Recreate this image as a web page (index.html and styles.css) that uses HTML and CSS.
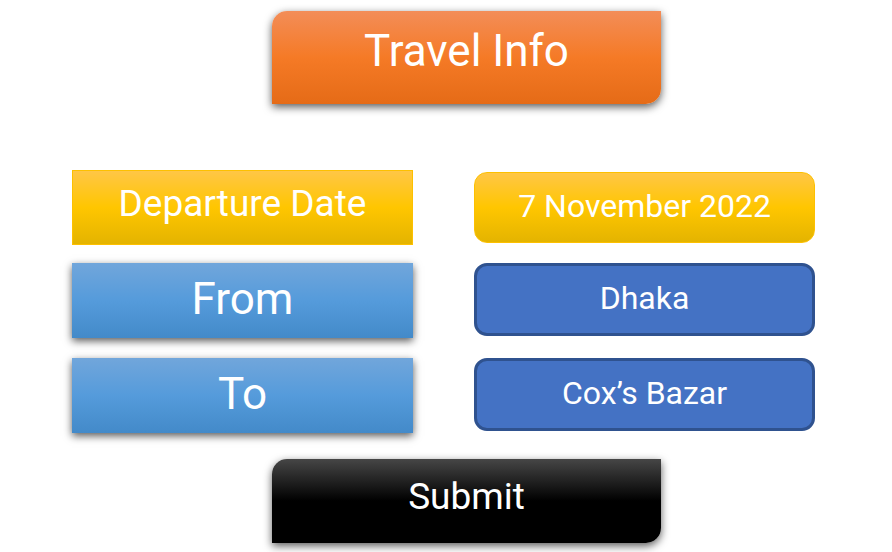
FILE: index.html
```html
<!DOCTYPE html>
<html lang="en">
<head>
  <meta charset="utf-8">
  <meta name="viewport" content="width=device-width, initial-scale=1">
  <title>Travel Info</title>
  <link rel="stylesheet" href="styles.css">
</head>
<body>
  <main class="page">
    <h1 class="title">Travel Info</h1>
    <form class="form">
      <div class="row">
        <label class="label label-date" for="date">Departure Date</label>
        <input class="value value-date" id="date" type="text" value="7 November 2022">
      </div>
      <div class="route">
        <div class="row">
          <label class="label label-place" for="from">From</label>
          <input class="value value-place" id="from" type="text" value="Dhaka">
        </div>
        <div class="row">
          <label class="label label-place" for="to">To</label>
          <input class="value value-place" id="to" type="text" value="Cox’s Bazar">
        </div>
      </div>
      <button class="submit" type="submit">Submit</button>
    </form>
  </main>
</body>
</html>
```

FILE: styles.css
```css
* {
  box-sizing: border-box;
}

body {
  margin: 0;
  background: #fff;
  color: #fff;
  font-family: Roboto, "Liberation Sans", sans-serif;
}

.page {
  padding: 11px 77px 9px 72px;
}

.title,
.submit {
  border-radius: 15px 0;
  box-shadow: 0 3px 8px rgba(0, 0, 0, 0.65);
  text-align: center;
}

.title {
  margin: 0 154px 66px 200px;
  padding: 14px 0 27px;
  background: linear-gradient(#f38d58, #f57a26 50%, #e56b17);
  font-size: 44px;
  font-weight: 400;
  line-height: 52px;
}

.form {
  display: flex;
  flex-direction: column;
}

.row {
  display: grid;
  grid-template-columns: 1fr 1fr;
  column-gap: 61px;
  align-items: center;
}

.route {
  display: grid;
  row-gap: 20px;
  margin: 18px 0 26px;
}

.label {
  display: block;
  height: 75px;
  text-align: center;
}

.label-date {
  padding-bottom: 8px;
  border: 1px solid #fdc000;
  background: linear-gradient(#ffc646, #ffc600 50%, #e4b400);
  font-size: 37px;
  line-height: 65px;
}

.label-place {
  background: linear-gradient(#71a6db, #559bdb 50%, #438ac9);
  box-shadow: 0 3px 8px rgba(0, 0, 0, 0.65);
  font-size: 44px;
  line-height: 72px;
}

.value {
  width: 100%;
  min-width: 0;
  margin: 0;
  border-radius: 13px;
  color: inherit;
  font-family: inherit;
  font-size: 32px;
  text-align: center;
}

.value-date {
  height: 71px;
  padding: 0 0 3px;
  border: 1px solid #fdc000;
  background: linear-gradient(#ffc646, #ffc600 50%, #e4b400);
}

.value-place {
  align-self: start;
  height: 73px;
  padding: 0 0 3px;
  border: 3px solid #2f528f;
  background: #4472c4;
}

.submit {
  height: 84px;
  margin: 0 154px 0 200px;
  padding: 0 0 9px;
  border: 0;
  background: linear-gradient(#464646, #000 50%);
  color: inherit;
  font-family: inherit;
  font-size: 37px;
}
```
